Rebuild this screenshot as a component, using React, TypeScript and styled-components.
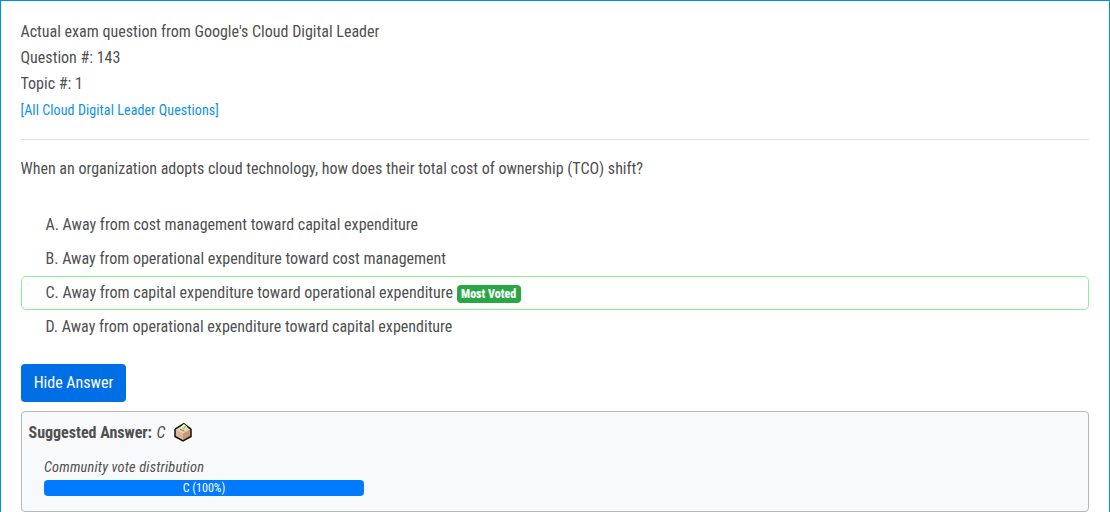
import React from "react";
import styled, { createGlobalStyle } from "styled-components";

const Global = createGlobalStyle`
  * { box-sizing: border-box; }
  body {
    margin: 0;
    overflow: hidden;
    background: #fff;
    color: #505050;
    font-family: "Roboto Condensed", Roboto, sans-serif;
    font-stretch: 75%;
    font-size: 16px;
    line-height: 26px;
  }
`;

const Panel = styled.main`
  height: 520px;
  border: 1px solid #0090e3;
  padding: 18px 20px 0;
`;

const Header = styled.header`
  height: 121px;
  border-bottom: 1px solid #e0e0e0;
`;

const Line = styled.div`
  margin-left: -0.5px;
  white-space: nowrap;
`;

const Link = styled.a`
  display: block;
  margin-left: -0.4px;
  color: #0c91ea;
  font-size: 14px;
  line-height: 26px;
  letter-spacing: 0.09px;
  text-decoration: none;
`;

const Question = styled.p`
  margin: 16px 0 0 -0.5px;
`;

const Choices = styled.ul`
  list-style: none;
  margin: 26px 0 0;
  padding: 0;
`;

const Choice = styled.li<{ $voted?: boolean }>`
  height: 34px;
  display: flex;
  align-items: center;
  gap: 4px;
  padding: 0 23.5px 1px;
  border: 1px solid ${(p) => (p.$voted ? "#90ee90" : "transparent")};
  border-radius: 5px;
`;

const Badge = styled.span`
  height: 18px;
  margin-top: 3px;
  margin-left: -0.5px;
  padding: 0 4.5px;
  border-radius: 4px;
  background: #28a745;
  color: #fff;
  font-size: 12px;
  line-height: 18px;
  font-weight: 800;
`;

const Button = styled.button`
  display: block;
  width: 105px;
  height: 38px;
  margin-top: 20px;
  padding: 0;
  border: 0;
  border-radius: 4px;
  background: #006fe6;
  color: #fff;
  font: inherit;
  font-weight: 450;
`;

const Answer = styled.section`
  height: 101px;
  margin-top: 9px;
  padding: 8px 6.5px;
  border: 1px solid #b8b8b8;
  border-radius: 4px;
  background: #f8f9fb;
`;

const AnswerRow = styled.div`
  display: flex;
  align-items: center;
  gap: 4.5px;
`;

const BoxIcon = styled.svg`
  width: 18px;
  height: 20px;
  margin: -2px 0 0 4.5px;
`;

const Votes = styled.div`
  width: 320px;
  margin: 10px 0 0 15.5px;
`;

const VotesTitle = styled.div`
  height: 24px;
  font-size: 14.4px;
  line-height: 24px;
  font-style: italic;
  letter-spacing: 0.17px;
`;

const Bar = styled.div`
  height: 16px;
  border-radius: 4px;
  background: #007bff;
  color: #fff;
  font-size: 12px;
  font-weight: 450;
  line-height: 16px;
  text-align: center;
`;

const choices = [
  { text: "A. Away from cost management toward capital expenditure" },
  { text: "B. Away from operational expenditure toward cost management" },
  { text: "C. Away from capital expenditure toward operational expenditure", voted: true },
  { text: "D. Away from operational expenditure toward capital expenditure" },
];

export default function App() {
  return (
    <>
      <Global />
      <Panel>
        <Header>
          <Line>Actual exam question from Google's Cloud Digital Leader</Line>
          <Line>Question #: 143</Line>
          <Line>Topic #: 1</Line>
          <Link>[All Cloud Digital Leader Questions]</Link>
        </Header>
        <Question>
          When an organization adopts cloud technology, how does their total cost of ownership (TCO) shift?
        </Question>
        <Choices>
          {choices.map((c) => (
            <Choice key={c.text} $voted={c.voted}>
              <span>{c.text}</span>
              {c.voted && <Badge>Most Voted</Badge>}
            </Choice>
          ))}
        </Choices>
        <Button>Hide Answer</Button>
        <Answer>
          <AnswerRow>
            <strong>Suggested Answer:</strong>
            <em>C</em>
            <BoxIcon viewBox="0 0 18 20">
              <path d="M1 7 9 3l8 4v7.5L9 19l-8-4.5Z" fill="#dfb393" />
              <path d="M1 7 9 3l8 4-8 4.5Z" fill="#ecd0b8" />
              <path d="M9 11.5 17 7v7.5L9 19Z" fill="#c99878" />
              <path d="M1 7v7.5L9 19l8-4.5V7" fill="none" stroke="#15110f" strokeWidth="1.5" />
              <path d="M1 7.2 9.8 1.6 17 7.2" fill="none" stroke="#15110f" strokeWidth="1.5" />
              <path d="M6.5 6.5 9.8 1.8l3.4 3L9.6 8.6Z" fill="#eef8dc" />
              <path d="m8.3 5.6 1.4 1.2 2.2-3.4" fill="none" stroke="#7fd040" strokeWidth="1.2" />
              <path d="m5.8 7.2 4.6 2" fill="none" stroke="#8a6248" strokeWidth="0.9" />
            </BoxIcon>
          </AnswerRow>
          <Votes>
            <VotesTitle>Community vote distribution</VotesTitle>
            <Bar>C (100%)</Bar>
          </Votes>
        </Answer>
      </Panel>
    </>
  );
}
